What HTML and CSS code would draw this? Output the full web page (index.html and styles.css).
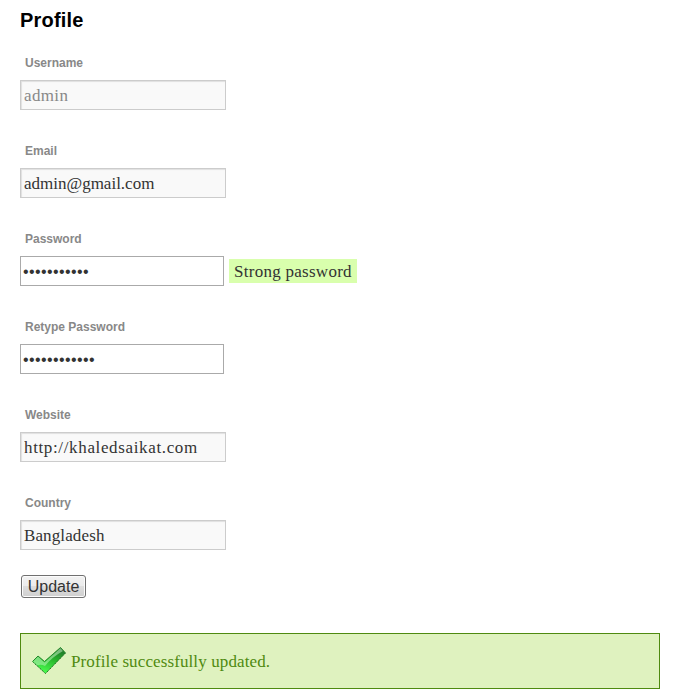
FILE: index.html
```html
<!DOCTYPE html>
<html lang="en">
<head>
<meta charset="utf-8">
<title>Profile</title>
<link rel="stylesheet" href="styles.css">
</head>
<body>
<main class="profile">
  <h1>Profile</h1>
  <form>
    <div class="field">
      <label for="username">Username</label>
      <input class="text username" id="username" type="text" value="admin" disabled>
    </div>
    <div class="field">
      <label for="email">Email</label>
      <input class="text email" id="email" type="text" value="admin@gmail.com">
    </div>
    <div class="field">
      <label for="password">Password</label>
      <div class="row">
        <input class="secret" id="password" type="password" value="abcdefghijk">
        <span class="strength">Strong password</span>
      </div>
    </div>
    <div class="field">
      <label for="retype">Retype Password</label>
      <input class="secret" id="retype" type="password" value="abcdefghijkl">
    </div>
    <div class="field">
      <label for="website">Website</label>
      <input class="text website" id="website" type="text" value="http://khaledsaikat.com">
    </div>
    <div class="field last">
      <label for="country">Country</label>
      <input class="text country" id="country" type="text" value="Bangladesh">
    </div>
    <button type="button">Update</button>
  </form>
  <div class="message">
    <svg class="check" width="36" height="30" viewBox="0 0 36 30">
      <defs>
        <linearGradient id="fill" x1="0.8" y1="0" x2="0.4" y2="1">
          <stop offset="0" stop-color="#1f6e2a"/>
          <stop offset="0.45" stop-color="#27b42c"/>
          <stop offset="1" stop-color="#4dff50"/>
        </linearGradient>
        <linearGradient id="shine" x1="0" y1="0" x2="0" y2="1">
          <stop offset="0" stop-color="#d5f5d3" stop-opacity="0.5"/>
          <stop offset="1" stop-color="#b5f5b5" stop-opacity="0.55"/>
        </linearGradient>
      </defs>
      <path d="M1.5 15.5 L7 10 L13.5 15.5 L29.5 1.5 L34.5 7 L14.5 27.5 Z" fill="url(#fill)"/>
      <path d="M2 15.5 L7 10.5 L13.5 16.5 L29.5 2 L32 5 Q21 11 14 20 Q10 18 6 19.5 Z" fill="url(#shine)"/>
      <path d="M1.5 15.5 L7 10 L13.5 15.5 L29.5 1.5 L34.5 7" fill="none" stroke="#258a2b" stroke-width="1"/>
      <path d="M34.5 7 L14.5 27.5 L1.5 15.5" fill="none" stroke="#14661b" stroke-width="1" stroke-dasharray="1.6 0.7"/>
    </svg>
    <span class="message-text">Profile successfully updated.</span>
  </div>
</main>
</body>
</html>
```
FILE: styles.css
```css
* { box-sizing: border-box; }

body {
  margin: 0;
  background: #fff;
  color: #333;
  font: 17px/24px "Liberation Serif", serif;
}

.profile { padding: 8px 16px 0 20px; }

h1 {
  margin: 0 0 27px;
  color: #000;
  font: bold 20px/24px "Liberation Sans", sans-serif;
  letter-spacing: 0.2px;
}

.field {
  height: 88px;
  display: flex;
  flex-direction: column;
  align-items: flex-start;
}

.field.last { height: 76px; }

label {
  margin: 0 0 13px 5px;
  color: #888;
  font: bold 12px/16px "Liberation Sans", sans-serif;
  height: 8px;
  display: flex;
  align-items: center;
}

input {
  display: block;
  height: 30px;
  margin: 0;
  padding: 2px 3px 0;
  outline: 0;
  color: #333;
}

.text {
  width: 206px;
  border: 1px solid #ccc;
  background: #f9f9f9;
  box-shadow: inset 1px 1px 1px rgba(0, 0, 0, 0.1);
  font: 17px/24px "Liberation Serif", serif;
}

.text:disabled { color: #888; }
.username { letter-spacing: 0.35px; }
.website { letter-spacing: 0.64px; }
.country { letter-spacing: 0.12px; }

.secret {
  width: 204px;
  padding-left: 2px;
  border: 1px solid #aaa;
  background: #fff;
  font: 16px/24px "Liberation Sans", sans-serif;
  letter-spacing: 0.4px;
}

.row {
  display: flex;
  align-items: center;
  gap: 5px;
}

.strength {
  width: 128px;
  height: 24px;
  padding-left: 5px;
  background: #d9ffad;
  line-height: 26px;
  letter-spacing: 0.27px;
  white-space: nowrap;
}

button {
  display: block;
  width: 65px;
  height: 23px;
  margin: 0 0 0 1px;
  padding: 0;
  border: 1px solid #707070;
  border-radius: 3px;
  background: linear-gradient(#f2f2f2 0%, #ebebeb 50%, #ddd 50%, #cfcfcf 100%);
  box-shadow: inset 0 0 0 1px #fcfcfc;
  color: #333;
  font: 16px/20px "Liberation Sans", sans-serif;
}

.message {
  display: flex;
  align-items: center;
  width: 640px;
  height: 56px;
  margin-top: 35px;
  padding-left: 10px;
  border: 1px solid #4f8a10;
  background: #dff2bf;
  color: #4f8a10;
}

.check { margin-right: 4px; }

.message-text {
  padding-top: 2px;
  letter-spacing: 0.11px;
}
```
